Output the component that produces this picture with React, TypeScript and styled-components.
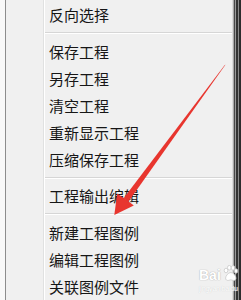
import styled, { createGlobalStyle } from 'styled-components';

const GlobalStyle = createGlobalStyle`
  html, body {
    margin: 0;
    padding: 0;
    background: #f0f0f0;
  }
  #root {
    width: 241px;
    height: 300px;
    overflow: hidden;
  }
`;

type Entry = { label: string } | { separator: true };

const entries: Entry[] = [
  { label: '反向选择' },
  { separator: true },
  { label: '保存工程' },
  { label: '另存工程' },
  { label: '清空工程' },
  { label: '重新显示工程' },
  { label: '压缩保存工程' },
  { separator: true },
  { label: '工程输出编辑' },
  { separator: true },
  { label: '新建工程图例' },
  { label: '编辑工程图例' },
  { label: '关联图例文件' },
];

const App = (): JSX.Element => {
  return (
    <>
      <GlobalStyle />
      <Screen>
        <Desktop />
        <Menu>
          <Gutter />
          <List>
            {entries.map((entry, i) =>
              'separator' in entry ? (
                <Separator key={i} />
              ) : (
                <Item key={i}>{entry.label}</Item>
              ),
            )}
          </List>
        </Menu>
        <WindowEdge />

        {/* red pointer drawn over the screenshot */}
        <Overlay width="241" height="300" viewBox="0 0 241 300">
          <polygon
            points="225.6,64.6 224.4,65.4 123.6,198.3 128.4,201.7"
            fill="#e8352e"
          />
          <polygon points="114.3,215 117.2,193.6 126,199.6 133.8,205.4" fill="#e8352e" />
        </Overlay>

        <Watermark>
          <Brand>
            <span>Bai</span>
            <svg width="17" height="17" viewBox="0 0 17 17">
              <g fill="#fff" stroke="#c9c9c9" strokeWidth="0.8">
                <ellipse cx="4" cy="5.5" rx="1.8" ry="2.3" />
                <ellipse cx="7.3" cy="2.7" rx="1.8" ry="2.3" />
                <ellipse cx="11" cy="2.9" rx="1.8" ry="2.3" />
                <ellipse cx="14" cy="6" rx="1.7" ry="2.2" />
                <path d="M8.8 7.5c-2.6 0-5.2 3.5-5.2 5.6 0 1.9 1.6 2.6 3 2.3 1-.2 1.6-.6 2.2-.6s1.2.4 2.2.6c1.4.3 3-.4 3-2.3 0-2.1-2.6-5.6-5.2-5.6z" />
              </g>
            </svg>
          </Brand>
          <SubBrand>jingyan.baidu</SubBrand>
        </Watermark>
      </Screen>
    </>
  );
};

const Screen = styled.div`
  position: relative;
  display: flex;
  width: 241px;
  height: 300px;
  overflow: hidden;
  font-family: 'Noto Sans CJK SC', 'Microsoft YaHei', sans-serif;
`;

const Desktop = styled.div`
  width: 5px;
  flex-shrink: 0;
  background: #f8f8f8;
`;

const Menu = styled.div`
  flex: 1;
  display: flex;
  background: #f0f0f0;
  border-left: 1px solid #8c8c8c;
`;

const Gutter = styled.div`
  width: 37px;
  flex-shrink: 0;
  border-right: 1px solid #e0e1e1;
`;

const List = styled.div`
  flex: 1;
  display: flex;
  flex-direction: column;
  padding-top: 1px;
  border-left: 1px solid #ffffff;
`;

const Item = styled.div`
  height: 27.4px;
  display: flex;
  align-items: center;
  padding-left: 4px;
  font-size: 15px;
  line-height: 1;
  color: #161616;
  white-space: nowrap;
`;

const Separator = styled.div`
  margin: 4px 0 3.8px;
  border-top: 1px solid #d6d6d6;
  border-bottom: 1px solid #ffffff;
`;

const WindowEdge = styled.div`
  width: 9px;
  flex-shrink: 0;
  background: linear-gradient(
    to right,
    #dcdcdc 0 1px,
    #a8a8a8 1px 2px,
    #474747 2px 3px,
    #9a9a9a 3px 4px,
    #333333 4px 6px,
    #8a8a8a 6px 7px,
    #2c2c2c 7px 9px
  );
`;

const Overlay = styled.svg`
  position: absolute;
  left: 0;
  top: 0;
  pointer-events: none;
`;

const Watermark = styled.div`
  position: absolute;
  left: 199px;
  top: 265px;
  display: flex;
  flex-direction: column;
  pointer-events: none;
`;

const Brand = styled.div`
  display: flex;
  align-items: flex-end;
  gap: 1px;
  font-family: 'Liberation Sans', Arial, sans-serif;
  font-weight: 700;
  font-size: 14px;
  line-height: 1;
  color: #ffffff;
  text-shadow: 0 0 1px #b5b5b5, 0 0 1px #b5b5b5;
`;

const SubBrand = styled.div`
  margin-top: 3px;
  font-family: 'Liberation Sans', Arial, sans-serif;
  font-size: 7px;
  letter-spacing: -0.2px;
  line-height: 1;
  color: #ffffff;
  text-shadow: 0 0 1px #c0c0c0;
  white-space: nowrap;
`;

export default App;
